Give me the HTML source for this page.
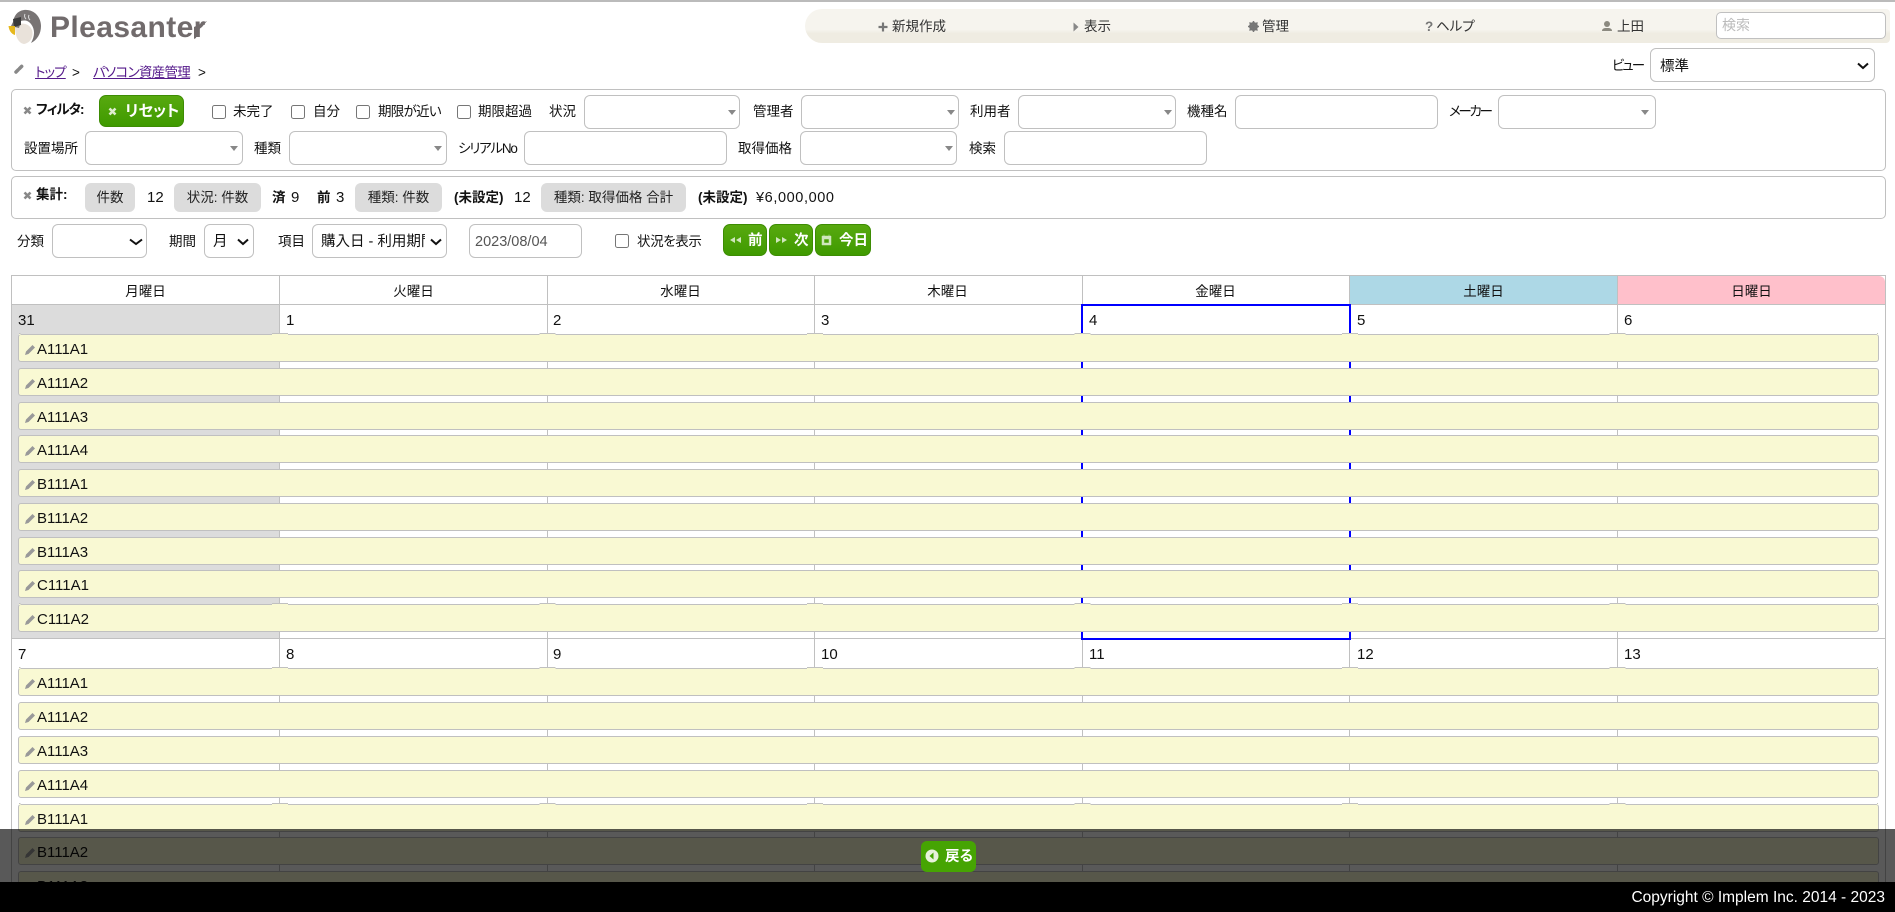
<!DOCTYPE html>
<html lang="ja">
<head>
<meta charset="utf-8">
<title>Pleasanter</title>
<style>
html,body{margin:0;padding:0;background:#fff}
body{position:relative;width:1895px;height:912px;overflow:hidden;font-family:"Liberation Sans","Noto Sans CJK JP",sans-serif;font-size:13.5px;color:#111;font-feature-settings:"palt"}
.a{position:absolute;box-sizing:border-box}
.t{position:absolute;line-height:20px;white-space:nowrap}
.bd{font-weight:bold}
.box{position:absolute;box-sizing:border-box;background:#fff;border:1px solid #c0c0c0;border-radius:6px}
.ck{position:absolute;box-sizing:border-box;width:14px;height:14px;background:#fff;border:1px solid #767676;border-radius:2.5px}
.ar{position:absolute;width:0;height:0;border-left:4.5px solid transparent;border-right:4.5px solid transparent;border-top:5px solid #888}
.panel{position:absolute;box-sizing:border-box;left:11px;width:1875px;border:1px solid #c0c0c0;border-radius:5px;background:#fff}
.btn{position:absolute;box-sizing:border-box;background:linear-gradient(#58a90f,#3f9a00);border:1px solid #3d8c03;border-radius:7px;color:#fff;font-weight:bold;line-height:20px;white-space:nowrap}
.chip{position:absolute;box-sizing:border-box;height:29px;top:183px;background:#dcdcdc;border-radius:6px;text-align:center;line-height:30px;color:#222}
.v{position:absolute;width:1px;top:275px;height:607px;background:#c0c0c0}
.h{position:absolute;left:11px;width:1875px;height:1px;background:#c0c0c0}
.hd{position:absolute;top:276px;height:28px;line-height:31px;text-align:center;width:267px;font-size:13.5px}
.d{position:absolute;line-height:20px;font-size:15px}
.b{position:absolute;box-sizing:border-box;left:18px;width:1861px;height:28px;background:#f9f9d3;border:1px solid #c0c0c0;border-radius:3px;line-height:29px;padding-left:18px;font-size:15px;color:#111}
.b svg{position:absolute;left:5px;top:8px}
.n::before{content:"";position:absolute;left:0;right:0;top:-2px;height:2px;background:linear-gradient(#c0c0c0 50%,#f9f9d3 50%);-webkit-mask-image:repeating-linear-gradient(to right,#000 0,#000 1.5px,transparent 1.5px,transparent 253px,#000 253px,#000 267.5px);mask-image:repeating-linear-gradient(to right,#000 0,#000 1.5px,transparent 1.5px,transparent 253px,#000 253px,#000 267.5px)}
</style>
</head>
<body>
<svg width="0" height="0" style="position:absolute"><defs>
<g id="pen"><path d="M1 12 L2 8.5 L8.5 2 L11 4.5 L4.5 11 Z" fill="#999"/></g>
<g id="x"><path d="M1.5 1.5 L7.5 7.5 M7.5 1.5 L1.5 7.5" stroke="#888" stroke-width="2.6" fill="none"/></g>
</defs></svg>

<!-- top bar -->
<div class="a" style="left:0;top:0;width:1895px;height:2px;background:#bbb"></div>

<!-- logo -->
<svg class="a" style="left:4px;top:6px" width="44" height="42" viewBox="0 0 44 42">
<path d="M11 20 C17 16 25 17 28 24 C30 31 26 37 20 38 C14 37 11 30 11 20 Z" fill="#e9e2da"/>
<path d="M9 16 C10 10 13 5 20 4 C30 3 37 11 37 20 C37 28 33 34 27 37 C31 30 31 23 27 18 C24 14 20 14 17 15 L15 22 L7 20 Z" fill="#787474"/>
<path d="M9 13 L17 11 L17 19 L10 21 Z" fill="#3a3a3a"/>
<path d="M4.5 20 L11 20 L11 29 C7 28 5 24 4.5 20 Z" fill="#e6b81e"/>
<path d="M21 8 C20 10 21 12 22 13 M25 9 C24 11 25 13 26 14" stroke="#ddd" stroke-width="1" fill="none"/>
</svg>
<div class="t" style="left:50px;top:12px;font-size:30px;line-height:32px;font-weight:bold;color:#716b6c;letter-spacing:.4px;font-family:'Liberation Sans',sans-serif">Pleasanter</div>
<svg class="a" style="left:180px;top:10px" width="40" height="34" viewBox="0 0 40 34"><path d="M14 17 L27 11 L22 17 L18 20 L16 28 L14 29 Z" fill="#716b6c"/></svg>

<!-- nav -->
<div class="a" style="left:805px;top:9px;width:1085px;height:34px;background:linear-gradient(#f6f4ee 60%,#efece2 72%);border-radius:17px 4px 4px 17px"></div>
<svg class="a" style="left:878px;top:22px" width="10" height="10" viewBox="0 0 10 10"><path d="M5 0.500 V9.500 M0.500 5 H9.500" stroke="#777" stroke-width="2.200"/></svg>
<div class="t" style="left:892px;top:17px;color:#333">新規作成</div>
<svg class="a" style="left:1073px;top:22px" width="6" height="10" viewBox="0 0 6 10"><path d="M0.500 0.500 L5.500 5 L0.500 9.500 Z" fill="#888"/></svg>
<div class="t" style="left:1084px;top:17px;color:#333">表示</div>
<svg class="a" style="left:1248px;top:21px" width="11" height="11" viewBox="0 0 11 11"><circle cx="5.500" cy="5.500" r="3.300" fill="none" stroke="#777" stroke-width="2.400"/><path d="M5.500 0 V11 M0 5.500 H11 M1.500 1.500 L9.500 9.500 M9.500 1.500 L1.500 9.500" stroke="#777" stroke-width="1.500"/></svg>
<div class="t" style="left:1262px;top:17px;color:#333">管理</div>
<div class="t bd" style="left:1425px;top:17px;color:#777">?</div>
<div class="t" style="left:1436px;top:17px;color:#333">ヘルプ</div>
<svg class="a" style="left:1601px;top:20px" width="12" height="12" viewBox="0 0 12 12"><circle cx="6" cy="4" r="3" fill="#8c8a80"/><path d="M1 11 C1 8 4 8 6 8 C8 8 11 8 11 11 Z" fill="#8c8a80"/></svg>
<div class="t" style="left:1617px;top:17px;color:#333">上田</div>
<div class="box" style="left:1716px;top:12px;width:170px;height:27px;border-radius:5px"></div>
<div class="t" style="left:1722px;top:15px;color:#bbb;font-size:14px">検索</div>

<!-- breadcrumb -->
<svg class="a" style="left:14px;top:62px" width="12" height="13" viewBox="0 0 12 13"><path d="M2 10 L9 3" stroke="#888" stroke-width="3.500" stroke-linecap="round" stroke-dasharray="3 2"/></svg>
<div class="t" style="left:35px;top:63px;color:#551a8b;text-decoration:underline;letter-spacing:-.9px">トップ</div>
<div class="t" style="left:72px;top:63px">&gt;</div>
<div class="t" style="left:93px;top:63px;color:#551a8b;text-decoration:underline;letter-spacing:-.7px">パソコン資産管理</div>
<div class="t" style="left:198px;top:63px">&gt;</div>
<div class="t" style="left:1612px;top:56px;letter-spacing:-2px">ビュー</div>
<div class="box" style="left:1650px;top:48px;width:225px;height:34px"></div>
<div class="t" style="left:1660px;top:57px;font-size:14.500px">標準</div>
<svg class="a" style="left:1857px;top:62px" width="12" height="8" viewBox="0 0 12 8"><path d="M1 1.500 L6 6 L11 1.500" stroke="#111" stroke-width="2" fill="none"/></svg>

<!-- filter panel -->
<div class="panel" style="top:89px;height:82px"></div>
<svg class="a" style="left:23px;top:106px" width="9" height="9"><use href="#x"/></svg>
<div class="t bd" style="left:36px;top:100px;letter-spacing:-1px">フィルタ:</div>
<div class="btn" style="left:99px;top:95px;width:85px;height:32px;padding:6px 0 0 25px;font-size:15.500px">リセット</div>
<svg class="a" style="left:108px;top:107px" width="9" height="9"><path d="M1.500 1.500 L7.500 7.500 M7.500 1.500 L1.500 7.500" stroke="#dfeed0" stroke-width="2.600"/></svg>
<div class="ck" style="left:212px;top:105px"></div><div class="t" style="left:233px;top:102px">未完了</div>
<div class="ck" style="left:291px;top:105px"></div><div class="t" style="left:313px;top:102px">自分</div>
<div class="ck" style="left:356px;top:105px"></div><div class="t" style="left:378px;top:102px;letter-spacing:-.7px">期限が近い</div>
<div class="ck" style="left:457px;top:105px"></div><div class="t" style="left:478px;top:102px">期限超過</div>
<div class="t" style="left:549px;top:102px">状況</div>
<div class="box" style="left:584px;top:95px;width:156px;height:34px"></div><div class="ar" style="left:728px;top:110px"></div>
<div class="t" style="left:753px;top:102px">管理者</div>
<div class="box" style="left:801px;top:95px;width:158px;height:34px"></div><div class="ar" style="left:947px;top:110px"></div>
<div class="t" style="left:970px;top:102px">利用者</div>
<div class="box" style="left:1018px;top:95px;width:158px;height:34px"></div><div class="ar" style="left:1164px;top:110px"></div>
<div class="t" style="left:1187px;top:102px">機種名</div>
<div class="box" style="left:1235px;top:95px;width:203px;height:34px"></div>
<div class="t" style="left:1449px;top:102px;letter-spacing:-2.300px">メーカー</div>
<div class="box" style="left:1498px;top:95px;width:158px;height:34px"></div><div class="ar" style="left:1641px;top:110px"></div>

<div class="t" style="left:24px;top:139px">設置場所</div>
<div class="box" style="left:85px;top:131px;width:158px;height:34px"></div><div class="ar" style="left:230px;top:146px"></div>
<div class="t" style="left:254px;top:139px">種類</div>
<div class="box" style="left:289px;top:131px;width:158px;height:34px"></div><div class="ar" style="left:434px;top:146px"></div>
<div class="t" style="left:458px;top:139px;letter-spacing:-1.200px">シリアルNo</div>
<div class="box" style="left:524px;top:131px;width:203px;height:34px"></div>
<div class="t" style="left:738px;top:139px">取得価格</div>
<div class="box" style="left:800px;top:131px;width:157px;height:34px"></div><div class="ar" style="left:945px;top:146px"></div>
<div class="t" style="left:969px;top:139px">検索</div>
<div class="box" style="left:1004px;top:131px;width:203px;height:34px"></div>

<!-- aggregation panel -->
<div class="panel" style="top:176px;height:43px"></div>
<svg class="a" style="left:23px;top:191px" width="9" height="9"><use href="#x"/></svg>
<div class="t bd" style="left:36px;top:185px">集計:</div>
<div class="chip" style="left:85px;width:50px">件数</div>
<div class="t" style="left:147px;top:188px;font-size:15px">12</div>
<div class="chip" style="left:174px;width:87px">状況: 件数</div>
<div class="t bd" style="left:272px;top:188px">済</div><div class="t" style="left:291px;top:188px;font-size:15px">9</div>
<div class="t bd" style="left:317px;top:188px">前</div><div class="t" style="left:336px;top:188px;font-size:15px">3</div>
<div class="chip" style="left:355px;width:87px">種類: 件数</div>
<div class="t bd" style="left:454px;top:188px">(未設定)</div><div class="t" style="left:514px;top:188px;font-size:15px">12</div>
<div class="chip" style="left:541px;width:145px">種類: 取得価格 合計</div>
<div class="t bd" style="left:698px;top:188px">(未設定)</div><div class="t" style="left:756px;top:188px;font-size:14.500px;letter-spacing:.6px">¥6,000,000</div>

<!-- controls -->
<div class="t" style="left:17px;top:232px">分類</div>
<div class="box" style="left:52px;top:224px;width:95px;height:34px"></div>
<svg class="a" style="left:129px;top:238px" width="14" height="8" viewBox="0 0 14 8"><path d="M1 1.500 L7 6 L13 1.500" stroke="#111" stroke-width="2" fill="none"/></svg>
<div class="t" style="left:169px;top:232px">期間</div>
<div class="box" style="left:204px;top:224px;width:50px;height:34px"></div>
<div class="t" style="left:213px;top:232px;font-size:14.500px">月</div>
<svg class="a" style="left:237px;top:238px" width="12" height="8" viewBox="0 0 12 8"><path d="M1 1.500 L6 6 L11 1.500" stroke="#111" stroke-width="2" fill="none"/></svg>
<div class="t" style="left:278px;top:232px">項目</div>
<div class="box" style="left:312px;top:224px;width:135px;height:34px"></div>
<div class="t" style="left:321px;top:232px;font-size:14.500px;width:104px;overflow:hidden">購入日 - 利用期間</div>
<svg class="a" style="left:430px;top:238px" width="12" height="8" viewBox="0 0 12 8"><path d="M1 1.500 L6 6 L11 1.500" stroke="#111" stroke-width="2" fill="none"/></svg>
<div class="box" style="left:469px;top:224px;width:113px;height:34px"></div>
<div class="t" style="left:475px;top:232px;font-size:14.500px;color:#555">2023/08/04</div>
<div class="ck" style="left:615px;top:234px"></div>
<div class="t" style="left:637px;top:232px;letter-spacing:-.4px">状況を表示</div>
<div class="btn" style="left:723px;top:224px;width:44px;height:32px;padding:6px 0 0 24px;font-size:14.500px">前</div>
<svg class="a" style="left:729px;top:236px" width="14" height="8" viewBox="0 0 14 8"><path d="M6 1 L1 4 L6 7 Z M12 1 L7 4 L12 7 Z" fill="#cfe6bc"/></svg>
<div class="btn" style="left:769px;top:224px;width:44px;height:32px;padding:6px 0 0 24px;font-size:14.500px">次</div>
<svg class="a" style="left:775px;top:236px" width="14" height="8" viewBox="0 0 14 8"><path d="M1 1 L6 4 L1 7 Z M7 1 L12 4 L7 7 Z" fill="#cfe6bc"/></svg>
<div class="btn" style="left:815px;top:224px;width:56px;height:32px;padding:6px 0 0 23px;font-size:14.500px">今日</div>
<svg class="a" style="left:821px;top:234px" width="11" height="12" viewBox="0 0 11 12"><path d="M1 2 H10 V11 H1 Z M3 5 V9 H8 V5 Z M3 0.500 V2 M8 0.500 V2" fill="#cfe6bc" stroke="#cfe6bc" stroke-width=".5" fill-rule="evenodd"/></svg>

<!-- calendar -->
<div class="a" style="left:1350px;top:276px;width:267px;height:28px;background:#add8e6"></div>
<div class="a" style="left:1618px;top:276px;width:267px;height:28px;background:#ffc0cb;border-top-right-radius:6px"></div>
<div class="a" style="left:12px;top:305px;width:267px;height:333px;background:#dcdcdc"></div>
<div class="h" style="top:275px"></div>
<div class="h" style="top:304px"></div>
<div class="h" style="top:638px"></div>
<div class="v" style="left:11px"></div>
<div class="v" style="left:279px"></div>
<div class="v" style="left:547px"></div>
<div class="v" style="left:814px"></div>
<div class="v" style="left:1082px"></div>
<div class="v" style="left:1349px"></div>
<div class="v" style="left:1617px"></div>
<div class="v" style="left:1885px"></div>

<div class="hd" style="left:12px">月曜日</div>
<div class="hd" style="left:280px">火曜日</div>
<div class="hd" style="left:547px">水曜日</div>
<div class="hd" style="left:814px">木曜日</div>
<div class="hd" style="left:1082px">金曜日</div>
<div class="hd" style="left:1350px">土曜日</div>
<div class="hd" style="left:1618px">日曜日</div>

<div class="a" style="left:1081px;top:304px;width:270px;height:336px;border:2px solid #0000ff"></div>

<div class="d" style="left:18px;top:311px">31</div>
<div class="d" style="left:286px;top:311px">1</div>
<div class="d" style="left:553px;top:311px">2</div>
<div class="d" style="left:821px;top:311px">3</div>
<div class="d" style="left:1089px;top:311px">4</div>
<div class="d" style="left:1357px;top:311px">5</div>
<div class="d" style="left:1624px;top:311px">6</div>
<div class="d" style="left:18px;top:645px">7</div>
<div class="d" style="left:286px;top:645px">8</div>
<div class="d" style="left:553px;top:645px">9</div>
<div class="d" style="left:821px;top:645px">10</div>
<div class="d" style="left:1089px;top:645px">11</div>
<div class="d" style="left:1357px;top:645px">12</div>
<div class="d" style="left:1624px;top:645px">13</div>

<div class="b n" style="top:334px"><svg width="12" height="13"><use href="#pen"/></svg>A111A1</div>
<div class="b" style="top:368px"><svg width="12" height="13"><use href="#pen"/></svg>A111A2</div>
<div class="b" style="top:402px"><svg width="12" height="13"><use href="#pen"/></svg>A111A3</div>
<div class="b" style="top:435px"><svg width="12" height="13"><use href="#pen"/></svg>A111A4</div>
<div class="b" style="top:469px"><svg width="12" height="13"><use href="#pen"/></svg>B111A1</div>
<div class="b" style="top:503px"><svg width="12" height="13"><use href="#pen"/></svg>B111A2</div>
<div class="b" style="top:537px"><svg width="12" height="13"><use href="#pen"/></svg>B111A3</div>
<div class="b" style="top:570px"><svg width="12" height="13"><use href="#pen"/></svg>C111A1</div>
<div class="b n" style="top:604px"><svg width="12" height="13"><use href="#pen"/></svg>C111A2</div>

<div class="b n" style="top:668px"><svg width="12" height="13"><use href="#pen"/></svg>A111A1</div>
<div class="b" style="top:702px"><svg width="12" height="13"><use href="#pen"/></svg>A111A2</div>
<div class="b" style="top:736px"><svg width="12" height="13"><use href="#pen"/></svg>A111A3</div>
<div class="b" style="top:770px"><svg width="12" height="13"><use href="#pen"/></svg>A111A4</div>
<div class="b n" style="top:804px"><svg width="12" height="13"><use href="#pen"/></svg>B111A1</div>
<div class="b" style="top:837px"><svg width="12" height="13"><use href="#pen"/></svg>B111A2</div>
<div class="b" style="top:871px"><svg width="12" height="13"><use href="#pen"/></svg>B111A3</div>

<!-- bottom -->
<div class="a" style="left:0;top:829px;width:1895px;height:53px;background:rgba(0,0,0,.65)"></div>
<div class="btn" style="left:921px;top:841px;width:55px;height:31px;padding:6px 0 0 24px;background:#46a403;border:none;border-radius:6px;font-size:14.500px">戻る</div>
<svg class="a" style="left:925px;top:849px" width="14" height="14" viewBox="0 0 14 14"><circle cx="7" cy="7" r="6.500" fill="#e8f2dc"/><path d="M8.500 3.500 L4.500 7 L8.500 10.500 Z" fill="#46a403"/></svg>
<div class="a" style="left:0;top:882px;width:1895px;height:30px;background:#000"></div>
<div class="t" style="right:10px;top:888px;color:#fff;font-size:15.500px">Copyright © Implem Inc. 2014 - 2023</div>
</body>
</html>
